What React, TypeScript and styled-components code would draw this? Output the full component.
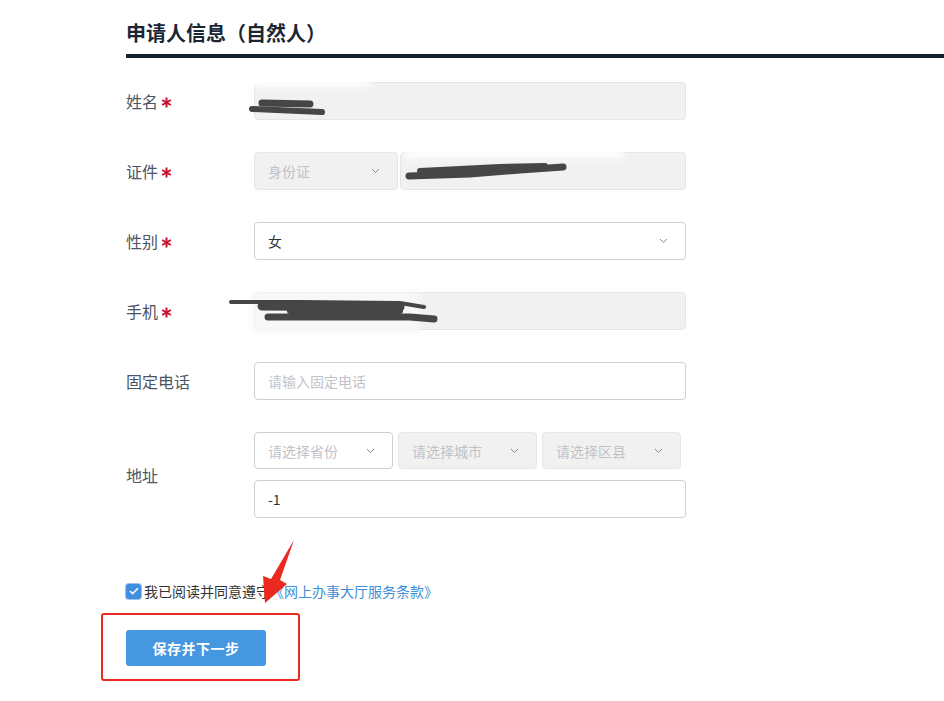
import React from "react";
import styled, { createGlobalStyle } from "styled-components";

const Global = createGlobalStyle`
  html, body { margin: 0; padding: 0; background: #fff; }
  body { font-family: "Microsoft YaHei", "Noto Sans CJK SC", "Liberation Sans", sans-serif; }
  * { box-sizing: border-box; }
`;

const Page = styled.div`
  position: relative;
  width: 944px;
  height: 701px;
  overflow: hidden;
  padding: 20px 0 0 126px;
`;

const Title = styled.h2`
  margin: 0;
  font-size: 20px;
  font-weight: 700;
  color: #1b2634;
  line-height: 26px;
`;

const Rule = styled.div`
  height: 4px;
  background: #14222f;
  margin-top: 8px;
  margin-right: -10px;
`;

const Form = styled.div`
  display: flex;
  flex-direction: column;
  gap: 32px;
  margin-top: 24px;
  width: 560px;
`;

const Row = styled.div`
  display: grid;
  grid-template-columns: 128px 432px;
  align-items: center;
`;

const Label = styled.div`
  font-size: 16px;
  color: #4d5563;
  display: flex;
  align-items: center;
`;

const StarIcon = styled.svg`
  margin-left: 3px;
  position: relative;
  top: 1px;
`;

const Star = () => (
  <StarIcon width="11" height="11" viewBox="0 0 11 11">
    <g stroke="#c8102e" strokeWidth="2" strokeLinecap="butt">
      <path d="M5.5 0.5v10" />
      <path d="M1.2 3l8.6 5" />
      <path d="M1.2 8l8.6-5" />
    </g>
  </StarIcon>
);

const Box = styled.div<{ $disabled?: boolean; $w?: number; $h?: number }>`
  height: ${(p) => p.$h ?? 38}px;
  width: ${(p) => (p.$w ? `${p.$w}px` : "auto")};
  flex: ${(p) => (p.$w ? "none" : "1 1 auto")};
  min-width: 0;
  border: 1px solid ${(p) => (p.$disabled ? "#e6e6e6" : "#cfcfcf")};
  background: ${(p) => (p.$disabled ? "#f1f1f1" : "#fff")};
  border-radius: 4px;
  display: flex;
  align-items: center;
  justify-content: space-between;
  padding: 0 17px 0 13px;
  font-size: 14px;
  color: #333;
`;

const Placeholder = styled.span`
  color: #bfc3c9;
  font-size: 14px;
`;

const Inline = styled.div<{ $gap: number }>`
  display: flex;
  gap: ${(p) => p.$gap}px;
`;

const Stack = styled.div`
  display: flex;
  flex-direction: column;
  gap: 11px;
`;

const Chevron = () => (
  <svg width="9" height="6" viewBox="0 0 9 6" fill="none">
    <path d="M1 1l3.5 3.5L8 1" stroke="#8a8a8a" strokeWidth="1" />
  </svg>
);

const Agree = styled.div`
  margin-top: 63px;
  height: 20px;
  display: flex;
  align-items: center;
  font-size: 14px;
  color: #333;
`;

const Check = styled.span`
  width: 15px;
  height: 15px;
  border-radius: 3px;
  background: #3f8ee0;
  box-shadow: 0 0 0 1px #9cc3ee;
  display: inline-flex;
  align-items: center;
  justify-content: center;
  margin-right: 3px;
`;

const Link = styled.span`
  color: #3d8fd6;
`;

const ButtonFrame = styled.div`
  margin-top: 12px;
  margin-left: -25px;
  width: 199px;
  height: 68px;
  border: 2px solid #ea2a1f;
  border-radius: 3px;
  padding: 15px 0 0 23px;
`;

const Button = styled.button`
  width: 140px;
  height: 36px;
  border: none;
  border-radius: 3px;
  background: #4597e0;
  color: #fff;
  font-weight: 700;
  font-size: 14px;
  font-family: inherit;
  letter-spacing: 0.5px;
`;

const Overlay = styled.svg`
  position: absolute;
  left: 0;
  top: 0;
  pointer-events: none;
`;

const Field: React.FC<{ label: string; req?: boolean; children: React.ReactNode }> = ({ label, req, children }) => (
  <Row>
    <Label>
      {label}
      {req && <Star />}
    </Label>
    {children}
  </Row>
);

export default function App() {
  return (
    <Page>
      <Global />
      <Title>申请人信息（自然人）</Title>
      <Rule />
      <Form>
        <Field label="姓名" req>
          <Box $disabled />
        </Field>
        <Field label="证件" req>
          <Inline $gap={2}>
            <Box $disabled $w={144}>
              <Placeholder>身份证</Placeholder>
              <Chevron />
            </Box>
            <Box $disabled />
          </Inline>
        </Field>
        <Field label="性别" req>
          <Box>
            <span>女</span>
            <Chevron />
          </Box>
        </Field>
        <Field label="手机" req>
          <Box $disabled />
        </Field>
        <Field label="固定电话">
          <Box>
            <Placeholder>请输入固定电话</Placeholder>
          </Box>
        </Field>
        <Field label="地址">
          <Stack>
            <Inline $gap={5}>
              <Box $w={139} $h={37}>
                <Placeholder>请选择省份</Placeholder>
                <Chevron />
              </Box>
              <Box $w={139} $h={37} $disabled>
                <Placeholder>请选择城市</Placeholder>
                <Chevron />
              </Box>
              <Box $w={139} $h={37} $disabled>
                <Placeholder>请选择区县</Placeholder>
                <Chevron />
              </Box>
            </Inline>
            <Box>
              <span>-1</span>
            </Box>
          </Stack>
        </Field>
      </Form>
      <Agree>
        <Check>
          <svg width="10" height="8" viewBox="0 0 10 8" fill="none">
            <path d="M1 4l2.6 2.6L9 1.2" stroke="#fff" strokeWidth="1.5" />
          </svg>
        </Check>
        我已阅读并同意遵守<Link>《网上办事大厅服务条款》</Link>
      </Agree>
      <ButtonFrame>
        <Button>保存并下一步</Button>
      </ButtonFrame>

      <Overlay width="944" height="701" viewBox="0 0 944 701">
        <defs>
          <filter id="blur" x="-20%" y="-50%" width="140%" height="200%">
            <feGaussianBlur stdDeviation="3" />
          </filter>
        </defs>
        <rect x="250" y="75" width="120" height="12" fill="#fff" filter="url(#blur)" opacity="0.9" />
        <rect x="404" y="145" width="220" height="14" fill="#fff" filter="url(#blur)" opacity="0.9" />
        <rect x="252" y="292" width="168" height="40" fill="#f8f8f8" filter="url(#blur)" />
        <g stroke="#464646" strokeLinecap="round" fill="none">
          <path d="M252 109 L322 112" strokeWidth="6" />
          <path d="M262 103 L310 104" strokeWidth="7" />
          <path d="M409 176 L470 174 L520 170 L563 167" strokeWidth="7" />
          <path d="M420 171 L500 167 L545 166" strokeWidth="6" />
          <path d="M231 302 L262 302 L300 302 L400 303 L424 307" strokeWidth="4" />
          <path d="M262 306 L400 307" strokeWidth="9" />
          <path d="M268 317 L410 317 L434 319" strokeWidth="7" />
          <path d="M290 311 L400 311" strokeWidth="6" />
        </g>
        <polygon points="294,540 280,580 287,584 265,603 263,576 271,579" fill="#ea2a1f" />
      </Overlay>
    </Page>
  );
}
